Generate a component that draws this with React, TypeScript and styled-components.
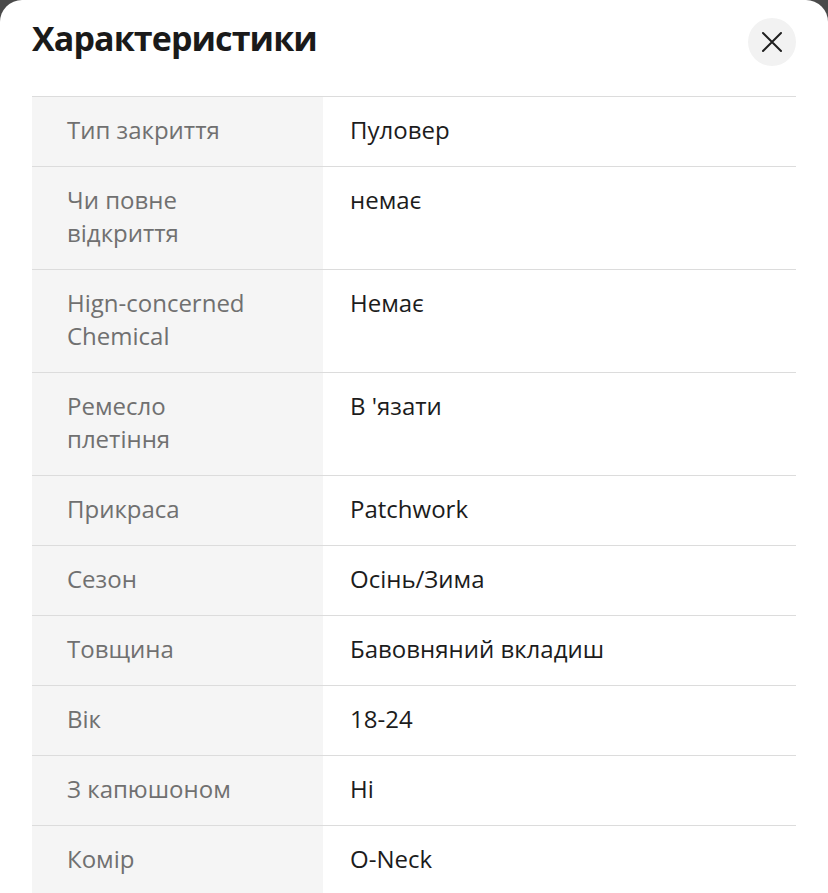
import React from "react";
import styled, { createGlobalStyle } from "styled-components";

const Global = createGlobalStyle`
  html, body { margin: 0; padding: 0; background: #4a4a4a; }
  body { font-family: "Open Sans", "Noto Sans", sans-serif; -webkit-font-smoothing: antialiased; }
  * { box-sizing: border-box; }
`;

const Sheet = styled.div`
  background: #ffffff;
  border-radius: 22px 22px 0 0;
  min-height: 893px;
  padding: 0 32px;
  overflow: hidden;
`;

const Header = styled.header`
  display: flex;
  align-items: flex-start;
  justify-content: space-between;
  height: 96px;
  padding-top: 18px;
`;

const Title = styled.h1`
  margin: 0;
  font-size: 34px;
  line-height: 40px;
  font-weight: 700;
  color: #1a1a1a;
  letter-spacing: -0.9px;
`;

const CloseButton = styled.button`
  width: 48px;
  height: 48px;
  border-radius: 50%;
  border: none;
  background: #f2f2f2;
  display: flex;
  align-items: center;
  justify-content: center;
  padding: 0;
  color: #1f1f1f;
`;

const Table = styled.div`
  border-top: 1px solid #dcdcdc;
`;

const Row = styled.div`
  display: grid;
  grid-template-columns: 291px 1fr;
  border-bottom: 1px solid #dcdcdc;
`;

const Label = styled.div`
  background: #f5f5f5;
  color: #707070;
  font-size: 24px;
  line-height: 33px;
  padding: 16px 60px 20px 35px;
`;

const Value = styled.div`
  color: #1c1c1c;
  font-size: 24px;
  line-height: 33px;
  padding: 16px 20px 20px 27px;
`;

const rows: [string, string][] = [
  ["Тип закриття", "Пуловер"],
  ["Чи повне відкриття", "немає"],
  ["Hign-concerned Chemical", "Немає"],
  ["Ремесло плетіння", "В 'язати"],
  ["Прикраса", "Patchwork"],
  ["Сезон", "Осінь/Зима"],
  ["Товщина", "Бавовняний вкладиш"],
  ["Вік", "18-24"],
  ["З капюшоном", "Ні"],
  ["Комір", "O-Neck"],
];

export default function App() {
  return (
    <>
      <Global />
      <Sheet>
        <Header>
          <Title>Характеристики</Title>
          <CloseButton aria-label="close">
            <svg width="22" height="22" viewBox="0 0 22 22" fill="none">
              <path d="M2 2L20 20M20 2L2 20" stroke="currentColor" strokeWidth="2" strokeLinecap="round" />
            </svg>
          </CloseButton>
        </Header>
        <Table>
          {rows.map(([l, v]) => (
            <Row key={l}>
              <Label>{l}</Label>
              <Value>{v}</Value>
            </Row>
          ))}
        </Table>
      </Sheet>
    </>
  );
}
